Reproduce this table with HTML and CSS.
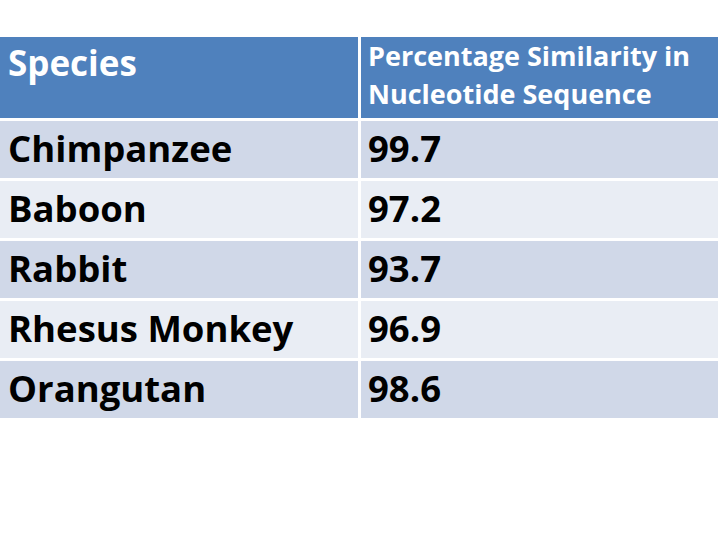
FILE: index.html
```html
<!DOCTYPE html>
<html>
<head>
<meta charset="utf-8">
<link rel="stylesheet" href="styles.css">
</head>
<body>
<div class="table">
  <div class="cell head"><div class="h-species">Species</div></div>
  <div class="cell head"><div class="h-pct">Percentage Similarity in<br>Nucleotide Sequence</div></div>

  <div class="cell odd"><div class="txt">Chimpanzee</div></div>
  <div class="cell odd"><div class="txt">99.7</div></div>

  <div class="cell even"><div class="txt">Baboon</div></div>
  <div class="cell even"><div class="txt">97.2</div></div>

  <div class="cell odd"><div class="txt">Rabbit</div></div>
  <div class="cell odd"><div class="txt">93.7</div></div>

  <div class="cell even"><div class="txt">Rhesus Monkey</div></div>
  <div class="cell even"><div class="txt">96.9</div></div>

  <div class="cell odd"><div class="txt">Orangutan</div></div>
  <div class="cell odd"><div class="txt">98.6</div></div>
</div>
</body>
</html>
```

FILE: styles.css
```css
html, body {
  margin: 0;
  padding: 0;
  background: #ffffff;
}
body {
  width: 720px;
  height: 540px;
  overflow: hidden;
  font-family: "Open Sans", Lato, sans-serif;
  font-weight: 700;
  font-variant-ligatures: none;
}
.table {
  margin-top: 37px;
  width: 718px;
  display: grid;
  grid-template-columns: 358px 357px;
  grid-template-rows: 81px repeat(5, 57px);
  column-gap: 3px;
  row-gap: 3px;
}
.cell {
  padding-left: 8px;
  box-sizing: border-box;
}
.cell:nth-child(even) {
  padding-left: 7px;
}
.head {
  background: #4f81bd;
  color: #ffffff;
}
.odd {
  background: #d0d8e8;
  color: #000000;
}
.even {
  background: #e9edf4;
  color: #000000;
}
.h-species {
  font-size: 35px;
  line-height: 38px;
  padding-top: 6.5px;
}
.h-pct {
  font-size: 27px;
  line-height: 38px;
}
.txt {
  font-size: 36.5px;
  line-height: 42px;
  padding-top: 6px;
}
```
